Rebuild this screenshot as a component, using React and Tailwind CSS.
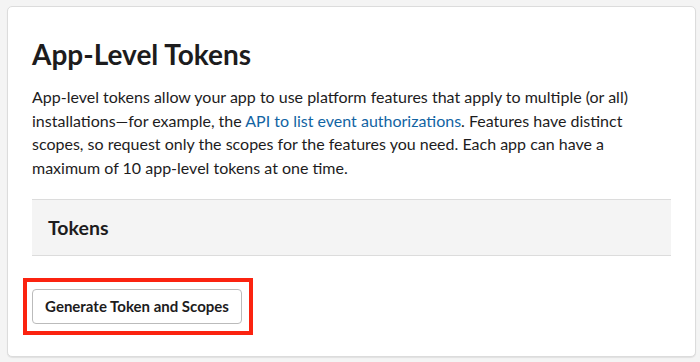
export default function App() {
  return (
    <div className="w-[700px] h-[362px] bg-[#f4f4f4] pt-[6px] pl-[7px] font-['Lato','Noto_Sans',sans-serif] text-[#1d1c1d]">
      <div className="w-[689px] h-[351px] bg-white border border-[#dcdcdc] rounded-[5px] shadow-[0_1px_1px_rgba(0,0,0,0.08)] px-6 pt-[30px]">
        <h1 className="text-[28px] leading-[34px] font-bold">App-Level Tokens</h1>
        <p className="mt-[14px] text-[16px] leading-[23.5px]">
          App-level tokens allow your app to use platform features that apply to multiple (or all) installations—for example, the{" "}
          <span className="text-[#1264a3]">API to list event authorizations</span>. Features have distinct scopes, so request only the scopes for the features you need. Each app can have a maximum of 10 app-level tokens at one time.
        </p>
        <div className="mt-[20px] h-[57px] bg-[#f4f4f4] border-y border-[#dcdcdc] px-4 flex items-center">
          <span className="text-[19.5px] font-bold">Tokens</span>
        </div>
        <div className="mt-[33px] relative w-[210px]">
          <button className="w-[210px] h-[35px] border border-[#bbbbbb] rounded-[4px] bg-white text-[15px] font-bold text-[#1d1c1d]">
            Generate Token and Scopes
          </button>
          <div className="absolute left-[-9px] top-[-11px] w-[230px] h-[57px] border-4 border-[#fb2310] pointer-events-none"></div>
        </div>
      </div>
    </div>
  );
}
